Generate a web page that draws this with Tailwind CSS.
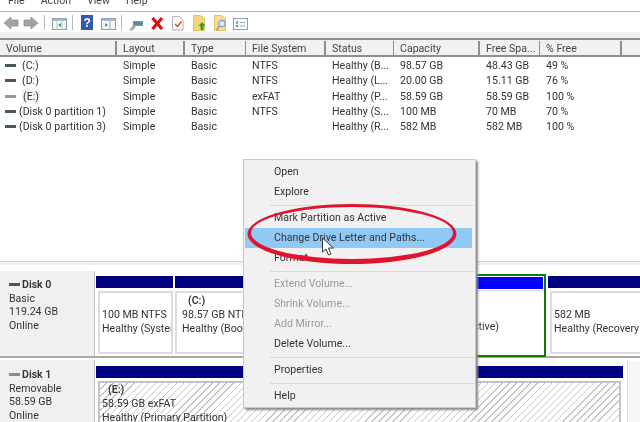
<!DOCTYPE html>
<html><head><meta charset="utf-8"><script src="https://cdn.jsdelivr.net/npm/@tailwindcss/browser@4"></script></head>
<body class="m-0 overflow-hidden bg-white">
<div class="relative w-[640px] h-[422px] overflow-hidden bg-white font-['Roboto','Noto_Sans',sans-serif] text-[10.6px] leading-[15px] text-[#333] blur-[0.35px]">
  <!-- menu bar -->
  <div class="h-[12px] border-b border-[#b5b5b5] flex items-end gap-[16px] pl-[8px] text-[#444] overflow-hidden">
    <span class="leading-[12px] translate-y-[-4px]">File</span><span class="leading-[12px] translate-y-[-4px]">Action</span><span class="leading-[12px] translate-y-[-4px]">View</span><span class="leading-[12px] translate-y-[-4px]">Help</span>
  </div>
  <!-- toolbar -->
  <div class="h-[20px] flex items-center">
    <svg width="252" height="20" viewBox="0 0 252 20">
      <path d="M4 11l7-6v3h7v6h-7v3z" fill="#a3a3a3" stroke="#8a8a8a" stroke-width=".7"/>
      <path d="M38 11l-7-6v3h-7v6h7v3z" fill="#a3a3a3" stroke="#8a8a8a" stroke-width=".7"/>
      <path d="M44.5 3v15M72.5 3v15M121.5 3v15" stroke="#b8b8b8"/>
      <rect x="52.5" y="6.5" width="14" height="11" fill="#f4f7fa" stroke="#8fa0b0"/><path d="M53 7h13v2H53z" fill="#a9b8c6"/><path d="M57 9.5v8M62 9.5v8" stroke="#b9c5d0"/><path d="M58 13l3-2v4z" fill="#3ca040"/>
      <rect x="81" y="3" width="12" height="15" fill="#3457b0"/><text x="83.5" y="15" font-size="12" font-weight="700" fill="#fff" font-family="Liberation Sans">?</text>
      <rect x="101.5" y="6.5" width="14" height="11" fill="#f4f7fa" stroke="#8fa0b0"/><path d="M102 7h13v2h-13z" fill="#a9b8c6"/><path d="M110 9.5v8" stroke="#9aa9b6"/><path d="M105 11l3 2-3 2z" fill="#3ca040"/>
      <path d="M129 18l4-5 3 2-4 4z" fill="#9db3c4"/><rect x="133" y="9" width="10" height="5" rx="1" fill="#6f8f9f"/><path d="M135 11.5h7" stroke="#2fa56a" stroke-width="1.5"/>
      <path d="M152.500 6l9.500 11M162 6l-9.500 11" stroke="#d81010" stroke-width="3.200"/>
      <path d="M172.500 4.500h7l3.500 3.500v10h-10.500z" fill="#fafafa" stroke="#b0b0b0"/><path d="M175 12l2.500 2.500 4-5" stroke="#d8452e" stroke-width="1.300" fill="none"/>
      <path d="M193.500 3.500h7l4 3v12h-11z" fill="#f4d57c" stroke="#e2bf60"/><path d="M202 10l3.500 4h-2v4h-3v-4h-2z" fill="#25a52b"/>
      <path d="M214.500 3.500h7l4 3v12h-11z" fill="#f6dd97" stroke="#e2bf60"/><circle cx="222" cy="11.500" r="3.200" fill="#dceaf4" stroke="#7da0b8" stroke-width="1.200"/><path d="M219.500 14l-3 4" stroke="#7da0b8" stroke-width="1.600"/>
      <rect x="233.500" y="6.500" width="14" height="11" fill="#fafcfe" stroke="#8fa0b0"/><path d="M236 9.500h2v2h-2zM236 13h2v2h-2z" fill="#5b86b0"/><path d="M240 10.500h5M240 14h5" stroke="#9aa9b6"/>
    </svg>
  </div>
  <div class="h-[6px] bg-[#f0f0f0]"></div>
  <!-- table header -->
  <div class="h-[19px] flex border-t-[2px] border-b-[2px] border-[#8e8e8e] bg-[#f1f1f1] text-[#444] leading-[15px] pt-[1px]">
    <div class="w-[117px] pl-[6px] border-r-[2px] border-[#8e8e8e]">Volume</div>
    <div class="w-[68px] pl-[6px] border-r-[2px] border-[#8e8e8e]">Layout</div>
    <div class="w-[61px] pl-[6px] border-r border-[#8e8e8e]">Type</div>
    <div class="w-[80px] pl-[6px] border-r-[2px] border-[#8e8e8e]">File System</div>
    <div class="w-[68px] pl-[6px] border-r border-[#8e8e8e]">Status</div>
    <div class="w-[86px] pl-[6px] border-r-[2px] border-[#8e8e8e]">Capacity</div>
    <div class="w-[60px] pl-[6px] border-r border-[#8e8e8e]">Free Spa...</div>
    <div class="w-[82px] pl-[6px] border-r-[2px] border-[#8e8e8e]">% Free</div>
    <div class="flex-1"></div>
  </div>
  <!-- rows -->
  <div class="h-[204px] pt-[1px]">
    <div class="grid grid-cols-[117px_68px_61px_80px_68px_86px_60px_82px] h-[15.300px] leading-[15px]">
      <div class="flex items-center pl-[5px] gap-[6px]"><span class="w-[11px] h-[3px] bg-[#4a5c50]"></span><span>(C:)</span></div><div class="pl-[6px]">Simple</div><div class="pl-[6px]">Basic</div><div class="pl-[6px]">NTFS</div><div class="pl-[6px]">Healthy (B...</div><div class="pl-[6px]">98.57 GB</div><div class="pl-[6px]">48.43 GB</div><div class="pl-[6px]">49 %</div>
    </div>
    <div class="grid grid-cols-[117px_68px_61px_80px_68px_86px_60px_82px] h-[15.300px] leading-[15px]">
      <div class="flex items-center pl-[5px] gap-[6px]"><span class="w-[11px] h-[3px] bg-[#4a5c50]"></span><span>(D:)</span></div><div class="pl-[6px]">Simple</div><div class="pl-[6px]">Basic</div><div class="pl-[6px]">NTFS</div><div class="pl-[6px]">Healthy (L...</div><div class="pl-[6px]">20.00 GB</div><div class="pl-[6px]">15.11 GB</div><div class="pl-[6px]">76 %</div>
    </div>
    <div class="grid grid-cols-[117px_68px_61px_80px_68px_86px_60px_82px] h-[15.300px] leading-[15px]">
      <div class="flex items-center pl-[5px] gap-[6px]"><span class="w-[11px] h-[3px] bg-[#9a9a9a]"></span><span class="bg-[#f3f3f3] px-[1px]">(E:)</span></div><div class="pl-[6px]">Simple</div><div class="pl-[6px]">Basic</div><div class="pl-[6px]">exFAT</div><div class="pl-[6px]">Healthy (P...</div><div class="pl-[6px]">58.59 GB</div><div class="pl-[6px]">58.59 GB</div><div class="pl-[6px]">100 %</div>
    </div>
    <div class="grid grid-cols-[117px_68px_61px_80px_68px_86px_60px_82px] h-[15.300px] leading-[15px]">
      <div class="flex items-center pl-[5px] gap-[3px]"><span class="w-[11px] h-[3px] bg-[#4a5c50]"></span><span>(Disk 0 partition 1)</span></div><div class="pl-[6px]">Simple</div><div class="pl-[6px]">Basic</div><div class="pl-[6px]">NTFS</div><div class="pl-[6px]">Healthy (S...</div><div class="pl-[6px]">100 MB</div><div class="pl-[6px]">70 MB</div><div class="pl-[6px]">70 %</div>
    </div>
    <div class="grid grid-cols-[117px_68px_61px_80px_68px_86px_60px_82px] h-[15.300px] leading-[15px]">
      <div class="flex items-center pl-[5px] gap-[3px]"><span class="w-[11px] h-[3px] bg-[#4a5c50]"></span><span>(Disk 0 partition 3)</span></div><div class="pl-[6px]">Simple</div><div class="pl-[6px]">Basic</div><div></div><div class="pl-[6px]">Healthy (R...</div><div class="pl-[6px]">582 MB</div><div class="pl-[6px]">582 MB</div><div class="pl-[6px]">100 %</div>
    </div>
  </div>
  <!-- divider -->
  <div class="h-[4px] bg-[#f0f0f0] border-t border-[#d0d0d0]"></div>
  <div class="h-[6px] bg-white"></div>
  <!-- disk 0 -->
  <div class="flex h-[87px] border-b-[2px] border-[#a8a8a8]">
    <div class="w-[94px] shrink-0 bg-[#f0f0f0] pl-[9px] pt-[7px] leading-[13.500px] text-[#333]">
      <div class="flex items-center gap-[2px] font-semibold"><span class="w-[11px] h-[3px] bg-[#4a5c50]"></span><span>Disk 0</span></div>
      <div>Basic</div><div>119.24 GB</div><div>Online</div>
    </div>
    <div class="flex-1 min-w-0 flex pl-[1px] pt-[5px] gap-[2px] border-l border-[#bdbdbd]">
      <div class="w-[77px] shrink-0 flex flex-col">
        <div class="h-[12px] bg-[#000080]"></div>
        <div class="mt-[3px] ml-[2px] h-[63px] border-[2px] border-[#dcdcdc] pl-[2px] pt-[15px] leading-[14px] overflow-hidden whitespace-nowrap">100 MB NTFS<br>Healthy (System</div>
      </div>
      <div class="w-[243px] shrink-0 flex flex-col">
        <div class="h-[12px] bg-[#000080]"></div>
        <div class="mt-[3px] h-[63px] border-[2px] border-[#dcdcdc] pl-[5px] pt-[1px] leading-[14px] overflow-hidden whitespace-nowrap"><span class="pl-[6px] font-semibold">(C:)</span><br>98.57 GB NTFS<br>Healthy (Boot)</div>
      </div>
      <div class="-mt-[2px] w-[126px] shrink-0 h-[83px] border-[2px] border-[#0a7a0a] p-[1px] flex flex-col">
        <div class="h-[12px] bg-[#0000ff] shrink-0"></div>
        <div class="mt-[1px] flex-1 border-t border-l border-[#dcdcdc] pt-[29px] leading-[14px] text-right pr-[49px] whitespace-nowrap">Healthy (Active)</div>
      </div>
      <div class="flex-1 flex flex-col min-w-0">
        <div class="h-[12px] bg-[#000080]"></div>
        <div class="mt-[3px] ml-[2px] h-[63px] border-[2px] border-r-0 border-[#dcdcdc] pl-[2px] pt-[15px] leading-[14px] overflow-hidden whitespace-nowrap">582 MB<br>Healthy (Recovery Partition)</div>
      </div>
    </div>
  </div>
  <div class="h-[2px]"></div>
  <!-- disk 1 -->
  <div class="flex h-[62px] overflow-hidden">
    <div class="w-[94px] shrink-0 bg-[#f0f0f0] pl-[9px] pt-[8px] leading-[13.500px] text-[#333]">
      <div class="flex items-center gap-[2px] font-semibold"><span class="w-[11px] h-[3px] bg-[#8c8c8c]"></span><span>Disk 1</span></div>
      <div>Removable</div><div>58.59 GB</div><div>Online</div>
    </div>
    <div class="flex-1 min-w-0 pl-[1px] pt-[6px] border-l border-[#bdbdbd]">
      <div class="w-[527px] flex flex-col">
        <div class="h-[12px] bg-[#000080]"></div>
        <div class="mt-[3px] ml-[2px] mr-[2px] h-[60px] border-x-[2px] border-t-[2px] border-[#c4c4c4] pl-[2px] leading-[14px] bg-[repeating-linear-gradient(135deg,#ffffff_0px,#ffffff_4px,#c6c6c6_4px,#c6c6c6_5px)]"><span class="pl-[6px] font-semibold">(E:)</span><br>58.59 GB exFAT<br>Healthy (Primary Partition)</div>
      </div>
    </div>
  </div>
  <div class="absolute left-[627px] top-[361px] w-[13px] h-[61px] bg-[#f7f7f7] border-l border-[#dcdcdc]"></div>
  <!-- context menu -->
  <div class="absolute left-[243px] top-[159px] w-[233px] h-[249px] bg-[#f1f1f1] border border-[#c8c8c8] shadow-[2px_2px_2px_#8a8a8a] pt-[2px] leading-[20px] text-[#333]">
    <div class="h-[20px] pl-[30px]">Open</div>
    <div class="h-[20px] pl-[30px]">Explore</div>
    <div class="h-[1px] my-[2.500px] ml-[26px] mr-[1px] bg-[#d8d8d8]"></div>
    <div class="h-[20px] pl-[30px]">Mark Partition as Active</div>
    <div class="h-[20px] pl-[29px] ml-[1px] mr-[3px] bg-[#90c8f6]">Change Drive Letter and Paths...</div>
    <div class="h-[20px] pl-[30px]">Format...</div>
    <div class="h-[1px] my-[2.500px] ml-[26px] mr-[1px] bg-[#d8d8d8]"></div>
    <div class="h-[20px] pl-[30px] text-[#9a9a9a]">Extend Volume...</div>
    <div class="h-[20px] pl-[30px] text-[#9a9a9a]">Shrink Volume...</div>
    <div class="h-[20px] pl-[30px] text-[#9a9a9a]">Add Mirror...</div>
    <div class="h-[20px] pl-[30px]">Delete Volume...</div>
    <div class="h-[1px] my-[2.500px] ml-[26px] mr-[1px] bg-[#d8d8d8]"></div>
    <div class="h-[20px] pl-[30px]">Properties</div>
    <div class="h-[1px] my-[2.500px] ml-[26px] mr-[1px] bg-[#d8d8d8]"></div>
    <div class="h-[20px] pl-[30px]">Help</div>
  </div>
  <!-- annotation -->
  <svg class="absolute left-0 top-0 pointer-events-none" width="640" height="422">
    <path fill-rule="evenodd" fill="#e0142c" d="M247.500 234a104.500 30 0 1 0 209 0a104.500 30 0 1 0 -209 0zM251 233a101 26 0 1 0 202 0a101 26 0 1 0 -202 0z"/>
    <path d="M322.500 238v14l3.500-3 2.500 6 2.500-1-2.500-6h5z" fill="#fff" stroke="#222" stroke-width=".9"/>
  </svg>
</div>
</body></html>
